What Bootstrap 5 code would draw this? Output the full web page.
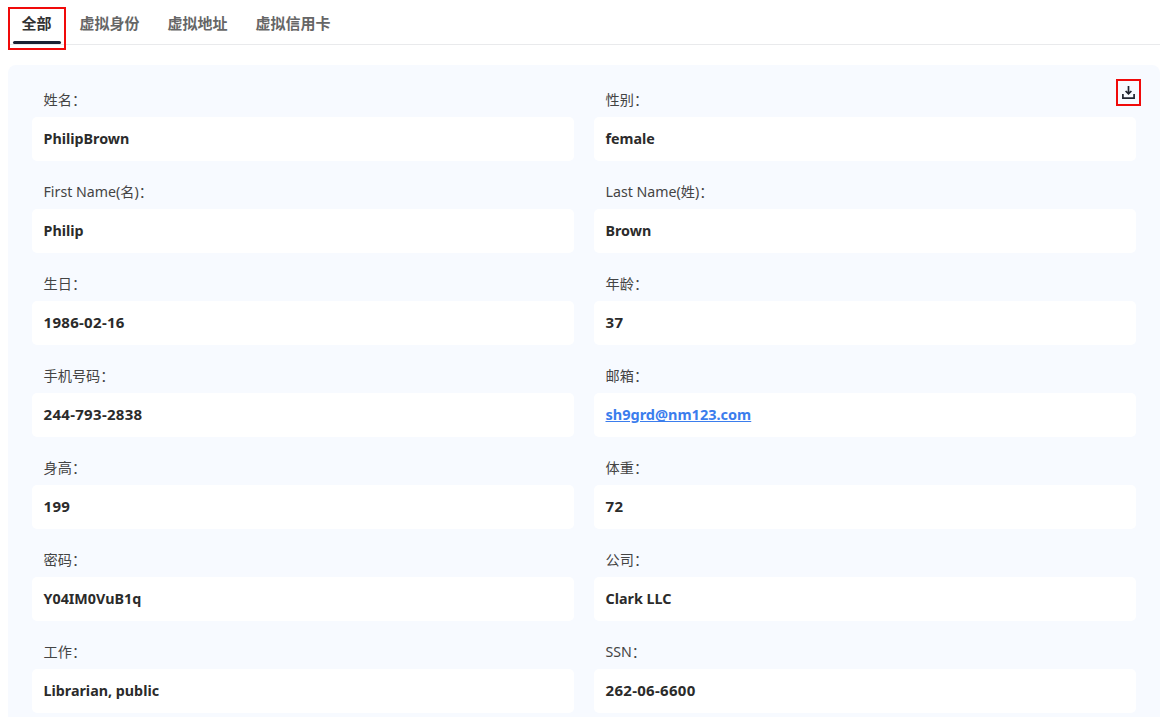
<!DOCTYPE html>
<html lang="zh">
<head>
<meta charset="utf-8">
<title>虚拟身份</title>
<link href="https://cdn.jsdelivr.net/npm/bootstrap@5.3.0/dist/css/bootstrap.min.css" rel="stylesheet">
<style>
html,body{height:717px;overflow:hidden;background:#fff}
body{font-family:"Noto Sans","Noto Sans CJK SC",sans-serif;font-size:14px;color:#333;padding:0 14px 0 8px}
.tabbar{height:45px;border-bottom:1px solid #e9eaec;padding-left:5px;gap:10px}
.tabitem{position:relative;padding:0 9px 0 8.5px;margin-right:.5px;height:44px;line-height:46px;font-size:15px;font-weight:700;color:#666}
.tabitem.on{color:#333}
.tabitem.on::after{content:"";position:absolute;left:0;right:0;bottom:0;height:3px;border-radius:2px;background:#1a2233}
.mark-box{outline:2px solid #f00a0a}
.tabmk{left:2px;top:9px;width:54px;height:39px;pointer-events:none}
.sheet{position:relative;margin-top:20px;background:#f7faff;border-radius:8px 8px 0 0;padding:4px 24px 0;height:652px}
.sheet-row{--bs-gutter-x:20px;--bs-gutter-y:0}
.fld-label{height:48px;padding:14px 12px 0 11.5px;display:flex;align-items:center;font-size:14.2px;color:#444;line-height:1}
.fld-value{height:44px;background:#fff;border-radius:5px;padding:0 11.5px;display:flex;align-items:center;font-weight:700;font-size:14.3px;color:#2b2b2b}
.fld-value a{color:#3b7ded;font-size:14.5px}
.fld-num{font-size:15px;letter-spacing:.3px;padding-bottom:2px}
.dl-btn{position:absolute;top:16px;right:21px;width:21px;height:23px;background:transparent;border:0;padding:0;display:flex;align-items:center;justify-content:center}
</style>
</head>
<body>
<div class="position-relative">
<nav class="tabbar d-flex">
  <div class="tabitem on">全部</div>
  <div class="tabitem">虚拟身份</div>
  <div class="tabitem">虚拟地址</div>
  <div class="tabitem">虚拟信用卡</div>
</nav>
<div class="mark-box position-absolute tabmk"></div>
</div>
<main class="sheet">
  <button class="dl-btn mark-box" type="button" aria-label="下载">
    <svg width="13" height="13" viewBox="0 0 13 13" fill="none" stroke="#1f2430" stroke-width="1.7"><path d="M6.5 0v7.6M3.6 5 6.5 7.9 9.4 5"/><path d="M.9 8v4.1h11.2V8"/></svg>
  </button>
  <div class="row sheet-row">
    <div class="col-6"><div class="fld-label">姓名：</div><div class="fld-value">PhilipBrown</div></div>
    <div class="col-6"><div class="fld-label">性别：</div><div class="fld-value">female</div></div>
    <div class="col-6"><div class="fld-label">First Name(名)：</div><div class="fld-value">Philip</div></div>
    <div class="col-6"><div class="fld-label">Last Name(姓)：</div><div class="fld-value">Brown</div></div>
    <div class="col-6"><div class="fld-label">生日：</div><div class="fld-value fld-num">1986-02-16</div></div>
    <div class="col-6"><div class="fld-label">年龄：</div><div class="fld-value fld-num">37</div></div>
    <div class="col-6"><div class="fld-label">手机号码：</div><div class="fld-value fld-num">244-793-2838</div></div>
    <div class="col-6"><div class="fld-label">邮箱：</div><div class="fld-value"><a href="#">sh9grd@nm123.com</a></div></div>
    <div class="col-6"><div class="fld-label">身高：</div><div class="fld-value fld-num">199</div></div>
    <div class="col-6"><div class="fld-label">体重：</div><div class="fld-value fld-num">72</div></div>
    <div class="col-6"><div class="fld-label">密码：</div><div class="fld-value">Y04IM0VuB1q</div></div>
    <div class="col-6"><div class="fld-label">公司：</div><div class="fld-value">Clark LLC</div></div>
    <div class="col-6"><div class="fld-label">工作：</div><div class="fld-value">Librarian, public</div></div>
    <div class="col-6"><div class="fld-label">SSN：</div><div class="fld-value fld-num">262-06-6600</div></div>
  </div>
</main>
</body>
</html>
